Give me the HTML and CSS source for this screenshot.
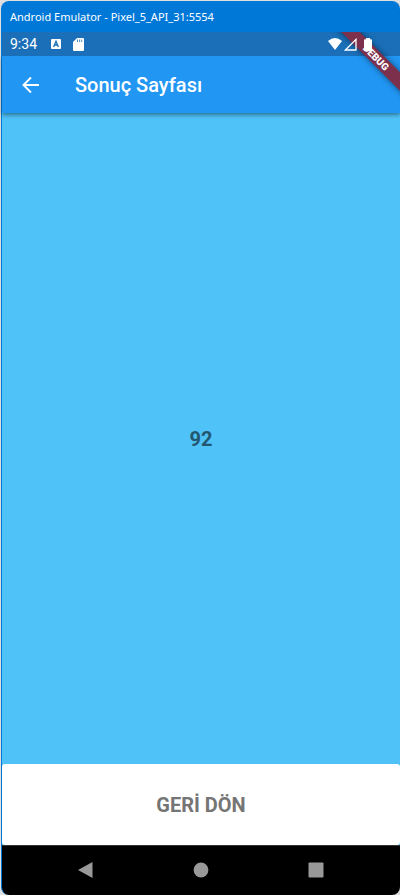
FILE: index.html
```html
<!DOCTYPE html>
<html lang="tr">
<head>
<meta charset="utf-8">
<meta name="viewport" content="width=device-width, initial-scale=1">
<title>Sonuç Sayfası</title>
<link rel="stylesheet" href="styles.css">
</head>
<body>
<div class="window">
  <div class="titlebar">Android Emulator - Pixel_5_API_31:5554</div>
  <div class="screen">
    <div class="statusbar">
      <span class="clock">9:34</span>
      <svg class="status-app" width="10" height="10" viewBox="0 0 10 10"><rect width="10" height="10" rx="1" fill="#fff"/><path d="M2.6 8 5 2.2 7.4 8M3.5 6h3" fill="none" stroke="#1a6fb8" stroke-width="1.3"/></svg>
      <svg class="status-card" width="11" height="13" viewBox="0 0 11 13"><path d="M4 0h6a1 1 0 0 1 1 1v11a1 1 0 0 1-1 1H1a1 1 0 0 1-1-1V4z" fill="#fff"/><path d="M4.500 1.500v2.500M6.600 1.500v2.500M8.700 1.500v2.500" stroke="#1a6fb8" stroke-width=".8"/></svg>
      <span class="status-icons">
        <svg width="14" height="12" viewBox="0 0 14 12"><path d="M0 3Q7-3 14 3L7 12z" fill="#fff"/></svg>
        <svg width="13" height="13" viewBox="0 0 13 13"><path d="M12 1.400V12H1.400z" fill="none" stroke="#fff" stroke-width="1.300"/></svg>
        <svg class="battery" width="8" height="13" viewBox="0 0 8 13"><path d="M2 0h4v1.300h1a1 1 0 0 1 1 1V12a1 1 0 0 1-1 1H1a1 1 0 0 1-1-1V2.300a1 1 0 0 1 1-1h1z" fill="#fff"/></svg>
      </span>
    </div>
    <header class="appbar">
      <button class="back" type="button" aria-label="Geri"><svg width="18" height="18" viewBox="0 0 18 18"><path d="M17 9H2M9 1.500 1.500 9 9 16.500" fill="none" stroke="#fff" stroke-width="1.900"/></svg></button>
      <h1>Sonuç Sayfası</h1>
    </header>
    <div class="debug"><span>DEBUG</span></div>
    <main class="result">92</main>
    <button class="return" type="button">GERİ DÖN</button>
  </div>
  <nav class="navbar">
    <button type="button" aria-label="Back"><svg width="16" height="18" viewBox="0 0 16 18"><path d="M15.500 1v16L1 9z" fill="#999"/></svg></button>
    <button type="button" aria-label="Home"><svg width="16" height="16" viewBox="0 0 16 16"><circle cx="8" cy="8" r="7.400" fill="#999"/></svg></button>
    <button type="button" aria-label="Overview"><svg width="16" height="16" viewBox="0 0 16 16"><rect x=".5" y=".5" width="15" height="15" rx="1" fill="#999"/></svg></button>
  </nav>
</div>
</body>
</html>
```
FILE: styles.css
```css
* { box-sizing: border-box; }
body {
  margin: 0;
  background: #dfdfdf;
  font-family: Roboto, sans-serif;
}
button {
  border: 0;
  padding: 0;
  background: none;
  font: inherit;
}
svg { display: block; }
.window {
  min-height: 100vh;
  display: flex;
  flex-direction: column;
  padding: 1px 0 0 1px;
}
.titlebar {
  height: 31px;
  padding-left: 9px;
  border-radius: 8px 8px 0 0;
  background: #0078d7;
  color: #fff;
  font: 11px/31px "Noto Sans", sans-serif;
}
.screen {
  position: relative;
  flex: 1;
  display: flex;
  flex-direction: column;
  border-left: 1px solid #0078d7;
  background: #4fc2f8;
}
.screen::before {
  content: "";
  position: absolute;
  inset: 0 0 auto;
  height: 24px;
  background: #1a6fb8;
}
.statusbar {
  position: relative;
  z-index: 3;
  height: 24px;
  display: flex;
  align-items: center;
  padding: 0 28px 0 8px;
  color: #fff;
}
.clock {
  width: 41px;
  font-size: 14px;
  line-height: 24px;
}
.status-card { margin-left: 12px; }
.status-icons {
  margin-left: auto;
  display: flex;
  align-items: center;
  gap: 2px;
}
.battery { margin-left: 5px; }
.appbar {
  height: 57px;
  display: flex;
  align-items: center;
  padding-left: 20px;
  background: #2196f3;
  box-shadow: 0 2px 4px rgba(0, 0, 0, .4);
}
.back { width: 53px; }
h1 {
  margin: 0;
  font-size: 20px;
  font-weight: 500;
  line-height: 24px;
  color: #fff;
}
.debug {
  position: absolute;
  z-index: 2;
  top: 0;
  right: 0;
  width: 80px;
  height: 80px;
  overflow: hidden;
  pointer-events: none;
}
.debug span {
  position: absolute;
  top: 19px;
  right: -36px;
  width: 120px;
  height: 13px;
  transform: rotate(45deg);
  background: #7d304c;
  box-shadow: 0 0 6px rgba(0, 0, 0, .5);
  color: #fff;
  font-size: 10px;
  font-weight: 900;
  line-height: 13px;
  text-align: center;
}
.result {
  flex: 1;
  display: grid;
  place-items: center;
  color: #235770;
  font-size: 20px;
  font-weight: 700;
}
.return {
  height: 81px;
  border-radius: 3px;
  background: #fff;
  color: #757575;
  font-size: 20px;
  font-weight: 700;
}
.navbar {
  height: 50px;
  display: flex;
  align-items: center;
  justify-content: space-between;
  padding: 0 76px 2px 75px;
  border-top: 1px solid #333;
  border-left: 1px solid #0078d7;
  border-radius: 0 0 8px 8px;
  background: #000;
}
```
